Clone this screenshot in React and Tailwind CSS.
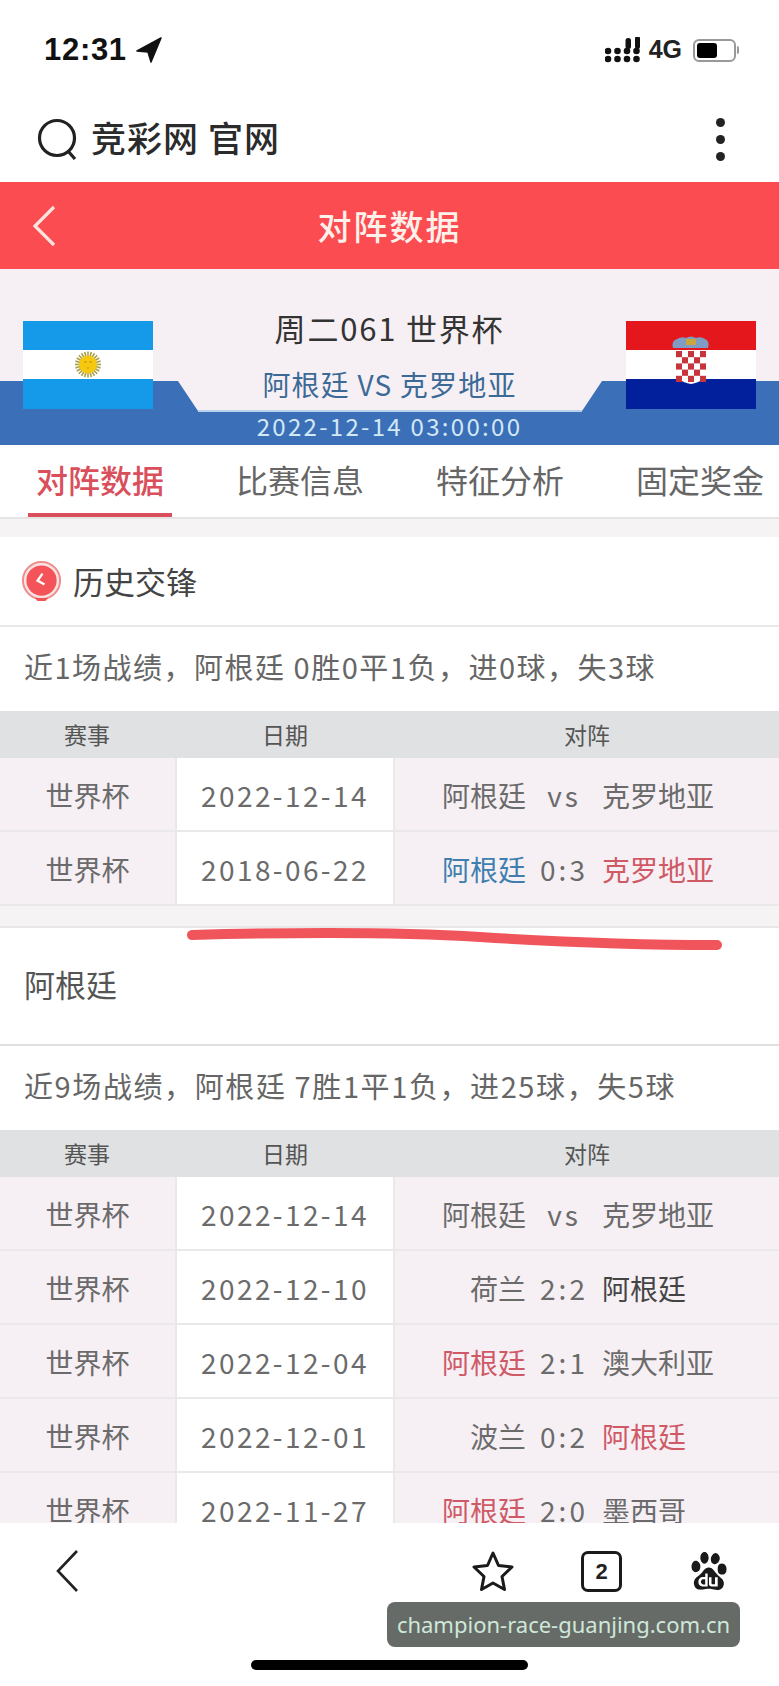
import React from "react";
import { SiBaidu } from "react-icons/si";

const cjk = { fontFamily: '"Noto Sans CJK SC", "Noto Sans", sans-serif' };
const R = "text-[#cf5a66]";
const B = "text-[#3f7fae]";

function Row({ date, l, s, r, lc = "", rc = "" }) {
  return (
    <div className="grid grid-cols-[177px_218px_1fr] h-[74px] border-b-2 border-[#ebe8ea] text-[28px] text-[#6b6b6b]">
      <div className="flex items-center justify-center pt-[1px] bg-[#f6f0f5] border-r-2 border-[#ebe8ea]">世界杯</div>
      <div className="flex items-center justify-center pt-[1px] bg-white border-r-2 border-[#ebe8ea] tracking-[2.4px]">{date}</div>
      <div className="grid grid-cols-[131px_76px_1fr] items-center pt-[1px] bg-[#f6f0f5]">
        <span className={`text-right ${lc}`}>{l}</span>
        <span className="text-center tracking-[3px]">{s}</span>
        <span className={rc}>{r}</span>
      </div>
    </div>
  );
}

function TableHead() {
  return (
    <div className="grid grid-cols-[177px_218px_1fr] h-[47px] bg-[#dfe1e2] text-[23px] text-[#555] items-center text-center">
      <span className="pr-[3px]">赛事</span>
      <span className="pr-[2px]">日期</span>
      <span>对阵</span>
    </div>
  );
}

function Argentina() {
  const rays = [];
  for (let i = 0; i < 24; i++) {
    const a = (i / 24) * Math.PI * 2;
    rays.push(<line key={i} x1={65 + Math.cos(a) * 8} y1={43.5 + Math.sin(a) * 8} x2={65 + Math.cos(a) * 13} y2={43.5 + Math.sin(a) * 13} stroke="#a8a04a" strokeWidth="1.6" />);
  }
  return (
    <svg viewBox="0 0 130 88" className="w-[130px] h-[88px] block">
      <rect width="130" height="88" fill="#149ae8" />
      <rect y="29" width="130" height="29" fill="#fff" />
      {rays}
      <circle cx="65" cy="43.500" r="9" fill="#f6c90e" />
      <path d="M61 41h3M66 41h3M64 47h2" stroke="#c9921a" strokeWidth="1" />
    </svg>
  );
}

function Croatia() {
  const cells = [];
  for (let y = 0; y < 5; y++)
    for (let x = 0; x < 5; x++)
      if ((x + y) % 2 === 0) cells.push(<rect key={`${x}-${y}`} x={50 + x * 6} y={30 + y * 6.2} width="6" height="6.2" fill="#c8343c" />);
  return (
    <svg viewBox="0 0 130 88" className="w-[130px] h-[88px] block">
      <rect width="130" height="29" fill="#e4171c" />
      <rect y="29" width="130" height="29" fill="#fff" />
      <rect y="58" width="130" height="30" fill="#03209c" />
      <path d="M50 29h30v22q0 9-15 12q-15-3-15-12z" fill="#fff" />
      {cells}
      <path d="M47 27q-2-7 4-9q5-3 9-1q5-3 10 0q5-2 9 1q5 2 3 9z" fill="#7e9cc4" />
      <path d="M60 18h10v6H60z" fill="#c8a83c" />
    </svg>
  );
}

export default function App() {
  return (
    <div className="relative w-[779px] h-[1686px] overflow-hidden bg-white flex flex-col" style={cjk}>
      {/* status bar */}
      <div className="h-[100px] shrink-0 flex items-center justify-between pl-[44px] pr-[40px]">
        <div className="flex items-center gap-[9px]">
          <span className="text-[31px] font-bold text-[#111] tracking-[0.7px]" style={{ fontFamily: '"Liberation Sans", sans-serif' }}>12:31</span>
          <svg viewBox="0 0 26 26" className="w-[26px] h-[26px]"><path d="M25 1 1 14l11 1 3 10z" fill="#111" stroke="#111" strokeWidth="1.500" strokeLinejoin="round" /></svg>
        </div>
        <div className="flex items-center gap-[9px]">
          <svg viewBox="0 0 35 26" className="w-[35px] h-[26px]" fill="#111">
            {[0, 1].flatMap((r) => [0, 1, 2, 3].map((c) => <circle key={`${r}${c}`} cx={3 + c * 9.5} cy={22 - r * 8} r="3.3" />))}
            <rect x="20.500" y="1" width="5.500" height="11" rx="2.500" />
            <rect x="30" y="-1" width="5" height="13" rx="2.500" />
          </svg>
          <span className="text-[25px] font-semibold text-[#222] mr-[2px]" style={{ fontFamily: '"Liberation Sans", sans-serif' }}>4G</span>
          <div className="flex items-center gap-[1px]">
            <div className="w-[43px] h-[23px] rounded-[6px] border-2 border-[#999] p-[2px] flex">
              <div className="w-[20px] bg-black rounded-[3px]" />
            </div>
            <div className="w-[2px] h-[8px] bg-[#999] rounded-r" />
          </div>
        </div>
      </div>

      {/* search row */}
      <div className="h-[82px] shrink-0 flex items-center justify-between pl-[37px] pr-[54px] pb-[4px]">
        <div className="flex items-center gap-[12px]">
          <svg viewBox="0 0 42 42" className="w-[42px] h-[42px]" fill="none" stroke="#222" strokeWidth="3.2">
            <circle cx="20" cy="20" r="17.500" />
            <path d="m31 33 7 8" />
          </svg>
          <span className="text-[35px] font-medium text-[#2b2b2b] tracking-[1px] leading-none mb-[5px]">竞彩网 官网</span>
        </div>
        <div className="flex flex-col gap-[8px]">
          <div className="w-[9px] h-[9px] rounded-full bg-[#222]" />
          <div className="w-[9px] h-[9px] rounded-full bg-[#222]" />
          <div className="w-[9px] h-[9px] rounded-full bg-[#222]" />
        </div>
      </div>

      {/* red title bar */}
      <div className="relative h-[87px] shrink-0 bg-[#fb4c51] flex items-center justify-center">
        <svg viewBox="0 0 26 42" className="absolute left-[31px] top-[23px] w-[26px] h-[42px]" fill="none" stroke="#fbe3df" strokeWidth="3.2"><path d="M23 2 4 21l19 19" /></svg>
        <span className="text-[34px] font-medium text-[#fdf1ea] tracking-[2px]">对阵数据</span>
      </div>

      {/* match header */}
      <div className="relative h-[176px] shrink-0 bg-[#f6f0f5]">
        <svg viewBox="0 0 779 64" preserveAspectRatio="none" className="absolute left-0 bottom-0 w-full h-[64px]">
          <path d="M0 0H178L198 30H582L602 0H779V64H0z" fill="#3b6fb8" />
          <path d="M198 30H582" stroke="#b9d2ec" strokeWidth="2" />
        </svg>
        <div className="relative flex justify-between pl-[23px] pr-[23px] pt-[52px]">
          <Argentina />
          <div className="flex flex-col items-center -mt-[17px]">
            <span className="h-[48px] flex items-center text-[31px] text-[#333] tracking-[1.800px]">周二061 世界杯</span>
            <span className="h-[64px] flex items-center text-[28px] text-[#3c6a96] tracking-[1.200px]">阿根廷 VS 克罗地亚</span>
            <span className="h-[20px] flex items-center text-[24px] text-[#d3e8f5] tracking-[2.300px] whitespace-nowrap">2022-12-14 03:00:00</span>
          </div>
          <Croatia />
        </div>
      </div>

      {/* tabs */}
      <div className="h-[74px] shrink-0 w-[800px] grid grid-cols-4 bg-white text-[32px] text-[#666] border-b-2 border-[#e4e4e4]">
        <div className="relative flex items-center justify-center font-medium text-[#d9505c] pb-[4px]">
          对阵数据
          <div className="absolute left-[28px] bottom-0 w-[144px] h-[4px] bg-[#d9505c]" />
        </div>
        <div className="flex items-center justify-center pb-[4px]">比赛信息</div>
        <div className="flex items-center justify-center pb-[4px]">特征分析</div>
        <div className="flex items-center justify-center pb-[4px]">固定奖金</div>
      </div>

      {/* scrolling content */}
      <div className="flex-1 min-h-0 overflow-hidden bg-[#f6f3f5] pt-[18px]">
        <div className="h-[90px] bg-white flex items-center pl-[21px] gap-[11px] border-b-2 border-[#e8e8e8]">
          <svg viewBox="0 0 42 42" className="w-[41px] h-[41px]">
            <circle cx="21" cy="20" r="19" fill="#f9e4e4" stroke="#ef8b8b" strokeWidth="2" />
            <circle cx="21" cy="20" r="15.500" fill="#f4535a" />
            <path d="m22 13-5 7 7 4" fill="none" stroke="#fff" strokeWidth="2.4" />
            <path d="M14 38h14l-3 3h-8z" fill="#f4535a" />
          </svg>
          <span className="text-[31px] text-[#444]">历史交锋</span>
        </div>
        <div className="h-[84px] bg-white flex items-center pl-[24px] pb-[4px] text-[29px] text-[#666] tracking-[1.500px]">近1场战绩，阿根廷 0胜0平1负，进0球，失3球</div>
        <TableHead />
        <Row date="2022-12-14" l="阿根廷" s="vs" r="克罗地亚" />
        <Row date="2018-06-22" l="阿根廷" s="0:3" r="克罗地亚" lc={B} rc={R} />
        <div className="h-[22px] border-b-2 border-[#e8e8e8]" />
        <div className="h-[118px] bg-white flex items-center pl-[24px] pb-[4px] text-[31px] text-[#555] border-b-2 border-[#e0e0e0]">阿根廷</div>
        <div className="h-[84px] bg-white flex items-center pl-[24px] pb-[4px] text-[29px] text-[#666] tracking-[1.600px]">近9场战绩，阿根廷 7胜1平1负，进25球，失5球</div>
        <TableHead />
        <Row date="2022-12-14" l="阿根廷" s="vs" r="克罗地亚" />
        <Row date="2022-12-10" l="荷兰" s="2:2" r="阿根廷" rc="text-[#444]" />
        <Row date="2022-12-04" l="阿根廷" s="2:1" r="澳大利亚" lc={R} />
        <Row date="2022-12-01" l="波兰" s="0:2" r="阿根廷" rc={R} />
        <Row date="2022-11-27" l="阿根廷" s="2:0" r="墨西哥" lc={R} />
      </div>

      {/* bottom bar */}
      <div className="h-[163px] shrink-0 bg-white flex flex-col">
        <div className="flex items-center justify-between pt-[27px] pl-[55px] pr-[51px]">
          <svg viewBox="0 0 24 42" className="w-[24px] h-[42px]" fill="none" stroke="#222" strokeWidth="2.6"><path d="M22 1 3 21l19 20" /></svg>
          <div className="flex items-center gap-[66px]">
            <svg viewBox="0 0 44 42" className="w-[44px] h-[42px]" fill="none" stroke="#1a1a1a" strokeWidth="3" strokeLinejoin="round">
              <path d="M22 3 27.500 15.500 41 17 31 26.500 33.500 39.500 22 33 10.500 39.500 13 26.500 3 17 16.500 15.500z" />
            </svg>
            <div className="w-[41px] h-[41px] rounded-[7px] border-[3px] border-[#1a1a1a] flex items-center justify-center text-[22px] font-bold text-[#222]" style={{ fontFamily: '"Liberation Sans", sans-serif' }}>2</div>
            <SiBaidu className="w-[38px] h-[38px] ml-[2px] text-[#1a1a1a]" />
          </div>
        </div>
        <div className="mt-auto mb-[16px] w-[277px] h-[10px] self-center rounded-full bg-black" />
      </div>

      {/* overlays */}
      <svg viewBox="0 0 560 30" className="absolute left-[180px] top-[926px] w-[560px] h-[30px]" fill="none">
        <path d="M12 9C120 6 220 6 300 11S470 19 537 19" stroke="#f0555c" strokeWidth="10" strokeLinecap="round" />
      </svg>
      <div className="absolute left-[387px] top-[1602px] w-[353px] h-[45px] rounded-[8px] bg-[#666b68] flex items-center justify-center text-[22px] text-[#cfe8d8] whitespace-nowrap" style={{ fontFamily: '"Noto Sans", sans-serif' }}>champion-race-guanjing.com.cn</div>
    </div>
  );
}
